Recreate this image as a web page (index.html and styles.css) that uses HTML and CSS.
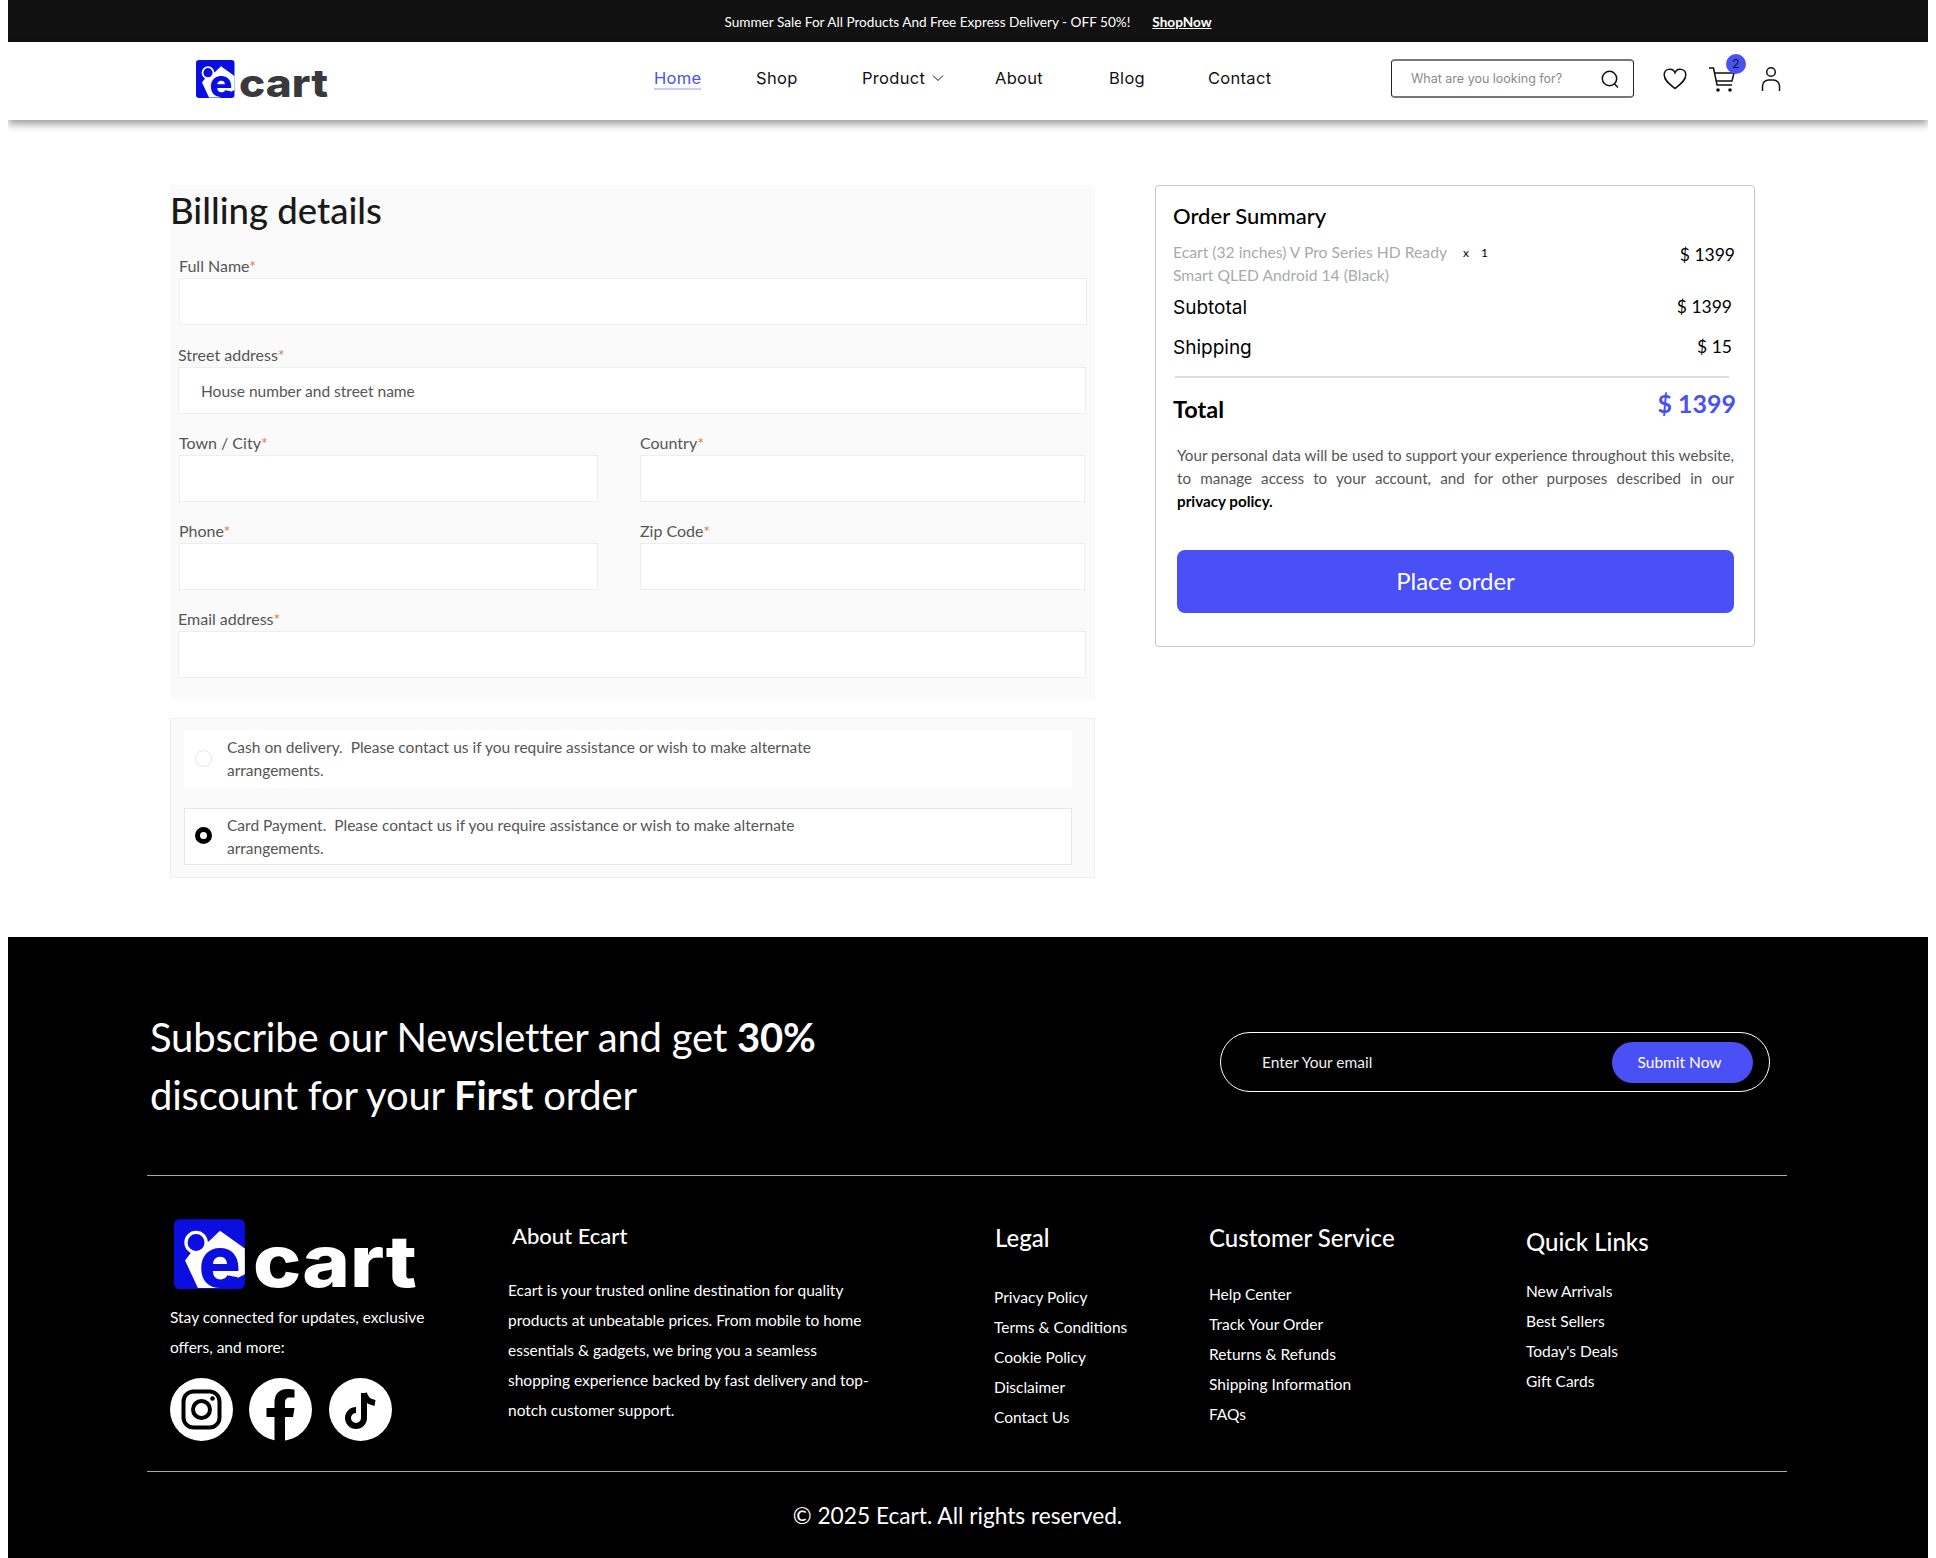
FILE: index.html
```html
<!DOCTYPE html>
<html lang="en">
<head>
    <meta charset="UTF-8">
    <meta name="viewport" content="width=device-width, initial-scale=1.0">
    <title>Ecart - Checkout</title>
    <link rel="stylesheet" href="styles.css">
</head>
<body>
    <div class="topbar">
        <span>Summer Sale For All Products And Free Express Delivery - OFF 50%!</span>
        <a href="#" class="shop-now">ShopNow</a>
    </div>

    <header class="header">
        <svg class="logo" viewBox="0 0 131 39" role="img" aria-label="ecart">
            <rect x="0" y="0" width="38.500" height="38" rx="3" fill="#0a0fe0"/>
            <path d="M6 22.500L9 18.500L19 12L25 6.300L38.500 16V30L24 37.500H13Z" fill="#fff"/>
            <circle cx="12" cy="12.700" r="5.500" fill="#0a0fe0" stroke="#fff" stroke-width="1.800"/>
            <text x="13.500" y="37" class="logo-e">e</text>
            <text x="43" y="37" textLength="89" lengthAdjust="spacingAndGlyphs" class="logo-word">cart</text>
        </svg>
        <nav class="nav">
            <a href="#" class="nav-link active">Home</a>
            <a href="#" class="nav-link">Shop</a>
            <a href="#" class="nav-link nav-product">Product
                <svg width="12" height="8" viewBox="0 0 12 8"><path d="M1 1.500l5 5 5-5" fill="none" stroke="#111" stroke-width="1"/></svg>
            </a>
            <a href="#" class="nav-link">About</a>
            <a href="#" class="nav-link">Blog</a>
            <a href="#" class="nav-link">Contact</a>
        </nav>
        <div class="search">
            <input type="text" placeholder="What are you looking for?">
            <svg width="20" height="20" viewBox="0 0 20 20"><circle cx="9.500" cy="9.500" r="7.200" fill="none" stroke="#111" stroke-width="1.500"/><path d="M14.500 15l3.500 3.500" stroke="#111" stroke-width="1.500"/></svg>
        </div>
        <div class="header-icons">
            <svg class="icon-heart" width="24" height="22" viewBox="0 0 24 22"><path d="M12 20.500C7 16.500 1.200 12.500 1.200 7A5.600 5.600 0 0 1 12 4.800 5.600 5.600 0 0 1 22.800 7c0 5.500-5.800 9.500-10.800 13.500z" fill="none" stroke="#111" stroke-width="1.500"/></svg>
            <div class="cart">
                <svg width="28" height="28" viewBox="0 0 28 28"><path d="M1 3h4.500l3.500 17h15M6.500 8H26l-2 8H8" fill="none" stroke="#111" stroke-width="1.500"/><circle cx="10" cy="25" r="1.800" fill="#111"/><circle cx="22" cy="25" r="1.800" fill="#111"/></svg>
                <span class="badge">2</span>
            </div>
            <svg class="icon-user" width="20" height="26" viewBox="0 0 20 26"><circle cx="10" cy="6" r="4.300" fill="none" stroke="#111" stroke-width="1.500"/><path d="M1.500 25v-5a6 6 0 0 1 6-6h5a6 6 0 0 1 6 6v5" fill="none" stroke="#111" stroke-width="1.500"/></svg>
        </div>
    </header>

    <main class="checkout">
        <div class="checkout-left">
            <form class="billing">
                <h2>Billing details</h2>
                <div class="field field-first">
                    <label>Full Name<span class="req">*</span></label>
                    <input type="text">
                </div>
                <div class="field">
                    <label>Street address<span class="req">*</span></label>
                    <input type="text" placeholder="House number and street name">
                </div>
                <div class="field-row">
                    <div class="field">
                        <label>Town / City<span class="req">*</span></label>
                        <input type="text">
                    </div>
                    <div class="field">
                        <label>Country<span class="req">*</span></label>
                        <input type="text">
                    </div>
                </div>
                <div class="field-row">
                    <div class="field">
                        <label>Phone<span class="req">*</span></label>
                        <input type="text">
                    </div>
                    <div class="field">
                        <label>Zip Code<span class="req">*</span></label>
                        <input type="text">
                    </div>
                </div>
                <div class="field">
                    <label>Email address<span class="req">*</span></label>
                    <input type="text">
                </div>
            </form>

            <div class="payment">
                <label class="pay-option pay-cash">
                    <input type="radio" name="pay">
                    <span>Cash on delivery.&nbsp; Please contact us if you require assistance or wish to make alternate<br>arrangements.</span>
                </label>
                <label class="pay-option pay-card">
                    <input type="radio" name="pay" checked>
                    <span>Card Payment.&nbsp; Please contact us if you require assistance or wish to make alternate<br>arrangements.</span>
                </label>
            </div>
        </div>

        <aside class="summary">
            <h3>Order Summary</h3>
            <div class="item">
                <p class="item-name">Ecart (32 inches) V Pro Series HD Ready Smart QLED Android 14 (Black)</p>
                <span class="item-qty">x 1</span>
                <span class="item-price">$ 1399</span>
            </div>
            <div class="sum-row sum-subtotal"><span>Subtotal</span><span class="sum-value">$ 1399</span></div>
            <div class="sum-row sum-shipping"><span>Shipping</span><span class="sum-value">$ 15</span></div>
            <hr class="sum-line">
            <div class="total-row"><span class="total-label">Total</span><span class="total-value">$ 1399</span></div>
            <p class="privacy">Your personal data will be used to support your experience throughout this website, to manage access to your account, and for other purposes described in our <strong>privacy policy.</strong></p>
            <button type="button" class="place-order">Place order</button>
        </aside>
    </main>

    <footer class="footer">
        <div class="newsletter">
            <p class="news-text">Subscribe our Newsletter and get <strong>30%</strong><br>discount for your <strong>First</strong> order</p>
            <form class="news-form">
                <input type="email" placeholder="Enter Your email">
                <button type="button">Submit Now</button>
            </form>
        </div>
        <hr class="footer-line">
        <div class="footer-cols">
            <div class="col-brand">
                <svg class="footer-logo" viewBox="0 0 131 39" role="img" aria-label="ecart">
                    <rect x="0" y="0" width="38.500" height="38" rx="3" fill="#0a0fe0"/>
                    <path d="M6 22.500L9 18.500L19 12L25 6.300L38.500 16V30L24 37.500H13Z" fill="#fff"/>
                    <circle cx="12" cy="12.700" r="5.500" fill="#0a0fe0" stroke="#fff" stroke-width="1.800"/>
                    <text x="13.500" y="37" class="logo-e">e</text>
                    <text x="43" y="37" textLength="89" lengthAdjust="spacingAndGlyphs" class="logo-word footer-word">cart</text>
                </svg>
                <p class="brand-text">Stay connected for updates, exclusive<br>offers, and more:</p>
                <div class="socials">
                    <svg class="social" viewBox="0 0 63 63"><circle cx="31.500" cy="31.500" r="31.500" fill="#fff"/><rect x="13.500" y="13.500" width="36" height="36" rx="10" fill="none" stroke="#000" stroke-width="4"/><circle cx="31.500" cy="31.500" r="8.500" fill="none" stroke="#000" stroke-width="4"/><circle cx="42.500" cy="20.500" r="2.300" fill="#000"/></svg>
                    <svg class="social" viewBox="0 0 63 63"><circle cx="31.500" cy="31.500" r="31.500" fill="#fff"/><path d="M36 63V39h8l1.500-9H36v-5.500c0-3 1.500-5 5-5h4.500v-8c-2-.3-4.500-.6-7-.6-8 0-13 4.700-13 13.500V30h-8v9h8v24z" fill="#000"/></svg>
                    <svg class="social social-tt" viewBox="0 0 63 63"><circle cx="31.500" cy="31.500" r="31.500" fill="#fff"/><path d="M35 15v25a8 8 0 1 1-8-8" fill="none" stroke="#000" stroke-width="6"/><path d="M35 15c1 6 5 9 11 10" fill="none" stroke="#000" stroke-width="6"/></svg>
                </div>
            </div>
            <div class="col-about">
                <h4>About Ecart</h4>
                <p>Ecart is your trusted online destination for quality<br>products at unbeatable prices. From mobile to home<br>essentials &amp; gadgets, we bring you a seamless<br>shopping experience backed by fast delivery and top-<br>notch customer support.</p>
            </div>
            <div class="col-links col-legal">
                <h4>Legal</h4>
                <a href="#">Privacy Policy</a>
                <a href="#">Terms &amp; Conditions</a>
                <a href="#">Cookie Policy</a>
                <a href="#">Disclaimer</a>
                <a href="#">Contact Us</a>
            </div>
            <div class="col-links col-service">
                <h4>Customer Service</h4>
                <a href="#">Help Center</a>
                <a href="#">Track Your Order</a>
                <a href="#">Returns &amp; Refunds</a>
                <a href="#">Shipping Information</a>
                <a href="#">FAQs</a>
            </div>
            <div class="col-links col-quick">
                <h4>Quick Links</h4>
                <a href="#">New Arrivals</a>
                <a href="#">Best Sellers</a>
                <a href="#">Today's Deals</a>
                <a href="#">Gift Cards</a>
            </div>
        </div>
        <hr class="footer-line">
        <p class="copyright">© 2025 Ecart. All rights reserved.</p>
    </footer>
</body>
</html>
```

FILE: styles.css
```css
/* General Reset */
body {
    margin: 0 8px;
    font-family: "Lato", "Open Sans", sans-serif;
    background-color: #fff;
    color: #111;
}

a {
    color: inherit;
    text-decoration: none;
}

input, button {
    font-family: inherit;
}

/* Top Bar */
.topbar {
    height: 42px;
    box-sizing: border-box;
    padding-top: 1px;
    background-color: #111;
    color: #fff;
    display: flex;
    align-items: center;
    justify-content: center;
    gap: 22px;
    font-size: 13.6px;
}

.shop-now {
    font-weight: 700;
    text-decoration: underline;
}

/* Header */
.header {
    position: relative;
    height: 78px;
    display: flex;
    align-items: center;
    padding-left: 188px;
    background-color: #fff;
    box-shadow: 0 4px 8px rgba(0, 0, 0, 0.4);
}

.logo {
    width: 131px;
    height: 39px;
    flex: none;
    margin-top: -3px;
    overflow: visible;
}

.logo-e {
    font-family: "Inter", sans-serif;
    font-weight: 800;
    font-size: 38px;
    fill: #0a0fe0;
}

.logo-word {
    font-family: "Inter", sans-serif;
    font-weight: 800;
    font-size: 39px;
    fill: #3a383d;
}

.footer-word {
    fill: #fff;
}

.nav {
    width: 737px;
    margin-left: 327px;
    display: grid;
    grid-template-columns: 102px 106px 133px 114px 99px 1fr;
    align-items: baseline;
    font-family: "Inter", sans-serif;
    font-size: 16.5px;
    letter-spacing: 0.3px;
    margin-top: -5px;
}

.nav-link {
    justify-self: start;
}

.nav-link.active {
    color: #4a50f5;
    border-bottom: 2px solid #c9cbff;
}

.nav-product {
    display: flex;
    align-items: center;
    gap: 7px;
    margin-top: 1px;
}

.search {
    width: 243px;
    height: 39px;
    box-sizing: border-box;
    border: 1px solid #222;
    border-top: 2px solid #777;
    border-bottom: 2px solid #777;
    border-radius: 4px;
    display: flex;
    align-items: center;
    padding: 0 13px 0 19px;
    margin-top: -5px;
}

.search input {
    flex: 1;
    min-width: 0;
    border: none;
    outline: none;
    padding: 0;
    font-family: "Inter", sans-serif;
    font-size: 12.5px;
}

.search input::placeholder {
    color: #8a8a8a;
}

.header-icons {
    display: flex;
    align-items: center;
    margin-left: 29px;
    margin-top: -4px;
}

.cart {
    position: relative;
    width: 28px;
    height: 28px;
    margin-left: 21px;
    margin-right: 25px;
}

.badge {
    position: absolute;
    top: -11px;
    right: -10px;
    width: 20px;
    height: 20px;
    border-radius: 50%;
    background-color: #4950f6;
    color: #111;
    font-family: "Inter", sans-serif;
    font-size: 12px;
    line-height: 20px;
    text-align: center;
}

/* Checkout */
.checkout {
    display: grid;
    grid-template-columns: 925px 600px;
    column-gap: 60px;
    align-items: start;
    padding: 65px 0 59px 162px;
}

.billing {
    height: 514px;
    box-sizing: border-box;
    padding-left: 8px;
    background-color: #fafafa;
    margin-bottom: 19px;
}

.billing h2 {
    margin: 0 0 19px -8px;
    font-size: 36.500px;
    line-height: 50px;
    padding-bottom: 1px;
    font-weight: 500;
    color: #1a1a1a;
}

.field {
    margin-bottom: 18px;
}

.field-first {
    margin-left: 1px;
    margin-bottom: 19px;
}

.field label {
    display: block;
    height: 23px;
    font-size: 16px;
    line-height: 22px;
    color: #555;
}

.req {
    color: #e07a3f;
}

.field input {
    display: block;
    width: 908px;
    height: 47px;
    box-sizing: border-box;
    border: 1px solid #eee;
    background-color: #fff;
    padding: 0 22px;
    font-size: 15.500px;
    outline: none;
}

.field input::placeholder {
    color: #555;
}

.field-row {
    display: grid;
    grid-template-columns: 419px 445px;
    column-gap: 42px;
    margin-left: 1px;
}

.field-row input {
    width: 100%;
}

/* Payment */
.payment {
    height: 160px;
    box-sizing: border-box;
    border: 1px solid #eee;
    background-color: #fafafa;
    padding: 11px 22px 0 13px;
}

.pay-option {
    display: flex;
    align-items: center;
    gap: 15px;
    padding-left: 11px;
    background-color: #fff;
    font-size: 15.500px;
    line-height: 23px;
    color: #555;
}

.pay-cash {
    height: 58px;
    margin-bottom: 20px;
}

.pay-cash span {
    margin-top: 0;
}

.pay-card {
    height: 57px;
    box-sizing: border-box;
    border: 1px solid #e6e6e6;
    padding-left: 10px;
}

.pay-option input {
    appearance: none;
    width: 17px;
    height: 17px;
    flex: none;
    margin: -2px 0 0;
    border: 1px solid #e3e3ee;
    border-radius: 50%;
    background-color: #fff;
}

.pay-option input:checked {
    border: 5px solid #000;
}

/* Order Summary */
.summary {
    height: 462px;
    box-sizing: border-box;
    padding: 14px 19px 0 17px;
    border: 1px solid #c8c8c8;
    border-radius: 4px;
}

.summary h3 {
    margin: 0 0 9px;
    font-size: 22px;
    line-height: 32px;
    font-weight: 500;
    color: #000;
}

.item {
    display: flex;
    align-items: flex-start;
    margin-bottom: 5px;
}

.item-name {
    width: 290px;
    margin: 0;
    font-size: 15.700px;
    line-height: 23px;
    color: #aaa;
}

.item-qty {
    font-size: 12px;
    line-height: 23px;
    word-spacing: 9px;
    color: #000;
}

.item-price {
    margin: 2px 0 0 auto;
    font-size: 17.500px;
    line-height: 24px;
    color: #000;
}

.sum-row {
    display: flex;
    justify-content: space-between;
    height: 30px;
    padding-right: 3px;
    font-family: "Inter", sans-serif;
    font-size: 19px;
    line-height: 31px;
    color: #000;
}

.sum-subtotal {
    margin-bottom: 10px;
}

.sum-value {
    font-family: "Lato", sans-serif;
    font-size: 17.500px;
    line-height: 29px;
}

.sum-line {
    height: 2px;
    margin: 14px 6px 0 2px;
    border: none;
    background-color: #ddd;
}

.total-row {
    display: flex;
    justify-content: space-between;
    align-items: flex-start;
    height: 66px;
    margin-right: -1px;
}

.total-label {
    margin-top: 14px;
    font-size: 23.500px;
    line-height: 34px;
    font-weight: 700;
    color: #000;
}

.total-value {
    margin-top: 6px;
    font-size: 25px;
    line-height: 38px;
    font-weight: 700;
    color: #4950f6;
}

.privacy {
    margin: 0 1px 37px 4px;
    font-size: 15.200px;
    line-height: 23px;
    color: #555;
    text-align: justify;
    text-align-last: justify;
}

.privacy strong {
    display: block;
    color: #000;
    text-align-last: left;
}

.place-order {
    display: block;
    width: 557px;
    height: 63px;
    margin-left: 4px;
    padding: 0 0 2px;
    border: none;
    border-radius: 8px;
    background-color: #4950f6;
    color: #fff;
    font-size: 24px;
}

/* Footer */
.footer {
    height: 621px;
    box-sizing: border-box;
    padding-top: 71px;
    background-color: #000;
    color: #fff;
}

.newsletter {
    display: flex;
    align-items: flex-start;
    height: 167px;
    padding: 0 158px 0 142px;
}

.news-text {
    margin: 0;
    font-size: 40px;
    letter-spacing: -0.2px;
    line-height: 58px;
}

.news-form {
    width: 550px;
    height: 60px;
    box-sizing: border-box;
    margin: 24px 0 0 auto;
    padding: 0 16px 0 41px;
    border: 1px solid #fff;
    border-radius: 30px;
    display: flex;
    align-items: center;
}

.news-form input {
    flex: 1;
    min-width: 0;
    border: none;
    outline: none;
    padding: 0;
    background: transparent;
    color: #fff;
    font-size: 15.500px;
}

.news-form input::placeholder {
    color: #eee;
}

.news-form button {
    width: 141px;
    height: 41px;
    padding: 0 6px 0 0;
    border: none;
    border-radius: 21px;
    background-color: #4950f6;
    color: #fff;
    font-size: 15.500px;
}

.footer-line {
    height: 1px;
    margin: 0 141px 0 139px;
    border: none;
    background-color: #aaa;
}

.footer-cols {
    height: 295px;
    box-sizing: border-box;
    display: grid;
    grid-template-columns: 337px 487px 215px 317px 1fr;
    padding: 43px 0 0 162px;
    align-items: start;
}

.footer-logo {
    display: block;
    width: 241px;
    height: 72px;
    margin-left: 4px;
    overflow: visible;
}

.brand-text {
    margin: 11px 0 16px;
    font-size: 15.500px;
    line-height: 30px;
}

.socials {
    display: flex;
    gap: 16px;
}

.social {
    width: 63px;
    height: 63px;
}

.social-tt {
    width: 65px;
}

.col-about h4 {
    margin: 1px 0 23px 5px;
    font-size: 22px;
    line-height: 32px;
    font-weight: 500;
}

.col-about p {
    margin: 0;
    padding-left: 1px;
    font-size: 15.500px;
    line-height: 30px;
}

.col-links h4 {
    font-size: 24px;
    line-height: 34px;
    font-weight: 500;
}

.col-links a {
    display: block;
    font-size: 15.500px;
    line-height: 30px;
}

.col-legal h4 {
    margin: 2px 0 27px 1px;
}

.col-service h4 {
    margin: 2px 0 24px;
}

.col-quick h4 {
    margin: 6px 0 17px;
}

.copyright {
    margin: 0;
    padding-right: 21px;
    height: 87px;
    display: flex;
    align-items: center;
    justify-content: center;
    font-size: 22.700px;
}
```
